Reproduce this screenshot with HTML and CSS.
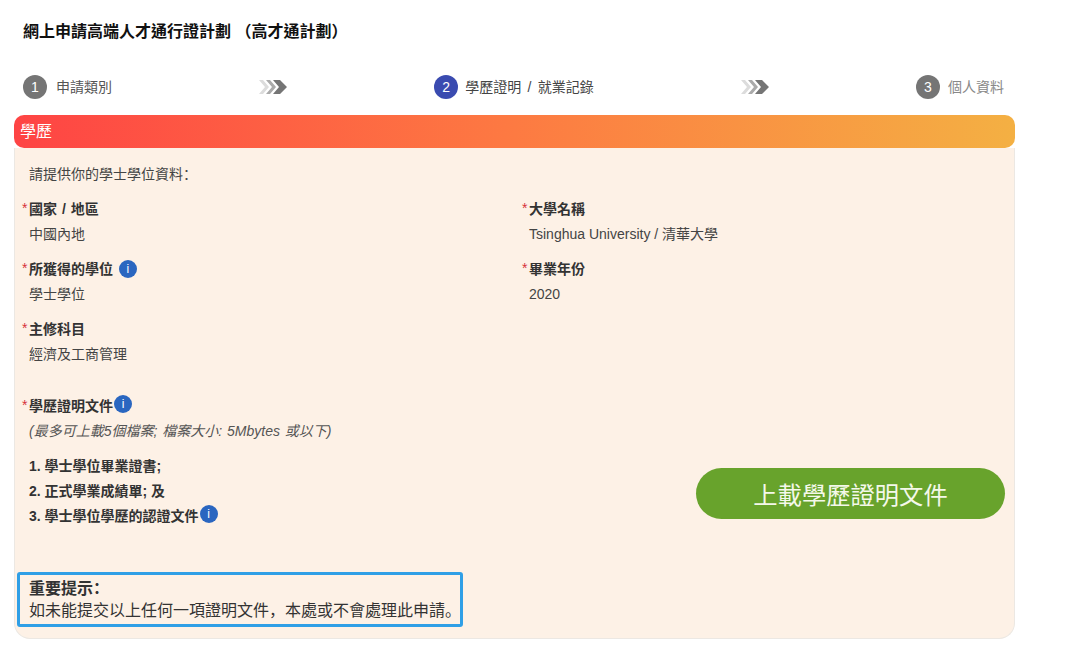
FILE: index.html
```html
<!DOCTYPE html>
<html lang="zh-Hant">
<head>
  <meta charset="UTF-8">
  <meta name="viewport" content="width=device-width, initial-scale=1.0">
  <title>網上申請高端人才通行證計劃</title>
  <link rel="stylesheet" href="styles.css">
</head>
<body>
  <div class="page">
    <h1 class="page-title">網上申請高端人才通行證計劃 （高才通計劃）</h1>

    <div class="steps">
      <div class="step">
        <span class="step-num">1</span>
        <span class="step-text">申請類別</span>
      </div>
      <svg class="step-arrow" viewBox="0 0 28 16" aria-hidden="true">
        <path d="M0 1h4l6 7-6 7H0l6-7z" fill="#dcdcdc"/>
        <path d="M7 1h4l6 7-6 7H7l6-7z" fill="#aaaaaa"/>
        <path d="M14 1h7l7 7-7 7h-7l6-7z" fill="#757575"/>
      </svg>
      <div class="step current">
        <span class="step-num">2</span>
        <span class="step-text">學歷證明 / 就業記錄</span>
      </div>
      <svg class="step-arrow" viewBox="0 0 28 16" aria-hidden="true">
        <path d="M0 1h4l6 7-6 7H0l6-7z" fill="#dcdcdc"/>
        <path d="M7 1h4l6 7-6 7H7l6-7z" fill="#aaaaaa"/>
        <path d="M14 1h7l7 7-7 7h-7l6-7z" fill="#757575"/>
      </svg>
      <div class="step last">
        <span class="step-num">3</span>
        <span class="step-text">個人資料</span>
      </div>
    </div>

    <div class="card">
      <div class="card-header">學歷</div>
      <div class="card-body">
        <p class="intro">請提供你的學士學位資料：</p>

        <div class="fields">
          <div class="field">
            <div class="label">國家 / 地區</div>
            <div class="value">中國內地</div>
          </div>
          <div class="field">
            <div class="label">大學名稱</div>
            <div class="value">Tsinghua University / 清華大學</div>
          </div>
          <div class="field">
            <div class="label">所獲得的學位 <span class="info">i</span></div>
            <div class="value">學士學位</div>
          </div>
          <div class="field">
            <div class="label">畢業年份</div>
            <div class="value">2020</div>
          </div>
          <div class="field">
            <div class="label">主修科目</div>
            <div class="value">經濟及工商管理</div>
          </div>
        </div>

        <div class="upload">
          <div class="label">學歷證明文件<span class="info raised">i</span></div>
          <div class="hint">(最多可上載5個檔案; 檔案大小: 5Mbytes 或以下)</div>
          <div class="upload-row">
            <ol class="doc-list">
              <li>1. 學士學位畢業證書;</li>
              <li>2. 正式學業成績單; 及</li>
              <li>3. 學士學位學歷的認證文件<span class="info raised">i</span></li>
            </ol>
            <button class="upload-button">上載學歷證明文件</button>
          </div>
        </div>

        <div class="notice">
          <strong>重要提示：</strong>
          <div>如未能提交以上任何一項證明文件，本處或不會處理此申請。</div>
        </div>
      </div>
    </div>
  </div>
</body>
</html>
```

FILE: styles.css
```css
body {
  margin: 0;
  background-color: white;
  color: #333;
  font-family: "Liberation Sans", "Noto Sans CJK TC", sans-serif;
  font-size: 14px;
}
.page {
  width: 1001px;
  padding: 0 0 15px 14px;
}
.page-title {
  margin: 0;
  padding: 21px 0 0 9px;
  height: 22px;
  line-height: 22px;
  font-size: 16px;
  font-weight: bold;
  color: #111;
}
.steps {
  display: flex;
  justify-content: space-between;
  align-items: center;
  height: 24px;
  margin-top: 32px;
  padding: 0 11px 0 9px;
}
.step {
  display: flex;
  align-items: center;
  gap: 9px;
}
.step.current {
  gap: 7px;
}
.step.last {
  gap: 8px;
}
.step-num {
  width: 24px;
  height: 24px;
  border-radius: 50%;
  background-color: #757575;
  color: white;
  text-align: center;
  line-height: 24px;
  font-size: 14px;
}
.step.current .step-num {
  background-color: #3a4bb0;
}
.step-text {
  padding-bottom: 2px;
  color: #555;
}
.step.current .step-text {
  color: #444;
  word-spacing: 2.5px;
}
.step.last .step-text {
  color: #888;
}
.step-arrow {
  width: 28px;
  height: 16px;
}
.card {
  margin-top: 16px;
}
.card-header {
  height: 33px;
  line-height: 33px;
  padding-left: 6px;
  border-radius: 10px;
  background: linear-gradient(to right, #fe4444, #fd7a42 50%, #f4b043);
  color: white;
  font-size: 16px;
}
.card-body {
  height: 491px;
  box-sizing: border-box;
  padding: 14px 2px 0;
  background-color: #fdf1e6;
  border: 1px solid #ece8e3;
  border-top: none;
  border-radius: 0 0 16px 16px;
}
.intro {
  margin: 0;
  padding-left: 12px;
  height: 24px;
  line-height: 24px;
  color: #444;
  font-family: "Liberation Sans", "Noto Sans CJK SC", sans-serif;
  font-feature-settings: "locl" 0;
}
.fields {
  display: grid;
  grid-template-columns: 500px 1fr;
  row-gap: 10px;
  margin-top: 11px;
  padding-left: 12px;
}
.label {
  position: relative;
  height: 25px;
  line-height: 25px;
  font-weight: bold;
  color: #333;
  word-spacing: 1px;
}
.label::before {
  content: "*";
  position: absolute;
  left: -7px;
  top: -1px;
  color: #d6323a;
  font-weight: normal;
}
.value {
  height: 25px;
  line-height: 25px;
  color: #444;
}
.info {
  display: inline-block;
  width: 18px;
  height: 18px;
  margin-left: 1px;
  border-radius: 50%;
  background-color: #2a66c0;
  color: white;
  text-align: center;
  line-height: 18px;
  font-size: 12px;
  font-weight: normal;
  vertical-align: 1px;
}
.info.raised {
  vertical-align: 3px;
}
.upload {
  margin-top: 27px;
  padding-left: 12px;
}
.hint {
  height: 25px;
  line-height: 25px;
  font-style: italic;
  color: #555;
  word-spacing: 1px;
}
.upload-row {
  display: flex;
  justify-content: space-between;
  align-items: center;
  margin-top: 10px;
  padding-right: 7px;
}
.doc-list {
  margin: 0;
  padding: 0;
  list-style: none;
  font-weight: bold;
  color: #333;
}
.doc-list li {
  height: 25px;
  line-height: 25px;
}
.upload-button {
  width: 309px;
  height: 51px;
  margin-top: 4px;
  border: none;
  border-radius: 26px;
  background-color: #68a32c;
  color: #f4f8ea;
  font-family: inherit;
  font-size: 24.3px;
}
.notice {
  box-sizing: border-box;
  width: 446px;
  height: 55px;
  margin-top: 43px;
  padding: 3px 0 0 9px;
  border: 3px solid #2f9fe6;
  border-radius: 3px;
  font-family: "Liberation Sans", "Noto Sans CJK SC", sans-serif;
  font-feature-settings: "locl" 0;
  font-size: 16px;
  line-height: 22px;
  color: #333;
  white-space: nowrap;
}
```
